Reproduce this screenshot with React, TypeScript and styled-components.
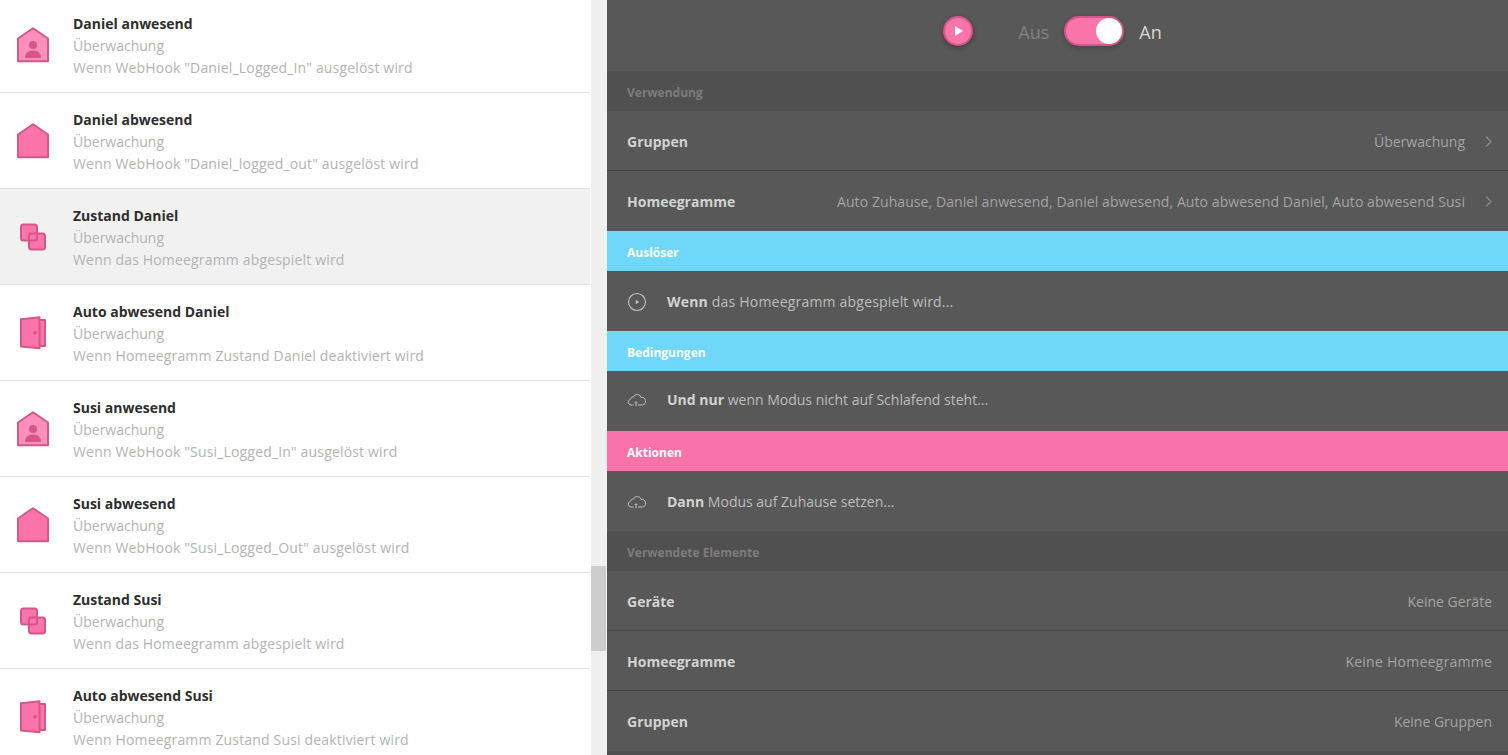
import styled, { createGlobalStyle } from 'styled-components';

const GlobalStyle = createGlobalStyle`
  html, body {
    margin: 0;
    padding: 0;
    height: 100%;
    overflow: hidden;
  }
  body {
    font-family: "Open Sans", "Noto Sans", sans-serif;
    font-size: 14px;
    background: #fff;
  }
`;

type IconKind = 'person' | 'house' | 'copy' | 'door';

const homeegrams: { title: string; text: string; icon: IconKind; active?: boolean }[] = [
  { title: 'Daniel anwesend', text: 'Wenn WebHook "Daniel_Logged_In" ausgelöst wird', icon: 'person' },
  { title: 'Daniel abwesend', text: 'Wenn WebHook "Daniel_logged_out" ausgelöst wird', icon: 'house' },
  { title: 'Zustand Daniel', text: 'Wenn das Homeegramm abgespielt wird', icon: 'copy', active: true },
  { title: 'Auto abwesend Daniel', text: 'Wenn Homeegramm Zustand Daniel deaktiviert wird', icon: 'door' },
  { title: 'Susi anwesend', text: 'Wenn WebHook "Susi_Logged_In" ausgelöst wird', icon: 'person' },
  { title: 'Susi abwesend', text: 'Wenn WebHook "Susi_Logged_Out" ausgelöst wird', icon: 'house' },
  { title: 'Zustand Susi', text: 'Wenn das Homeegramm abgespielt wird', icon: 'copy' },
  { title: 'Auto abwesend Susi', text: 'Wenn Homeegramm Zustand Susi deaktiviert wird', icon: 'door' },
];

function ListIcon({ kind }: { kind: IconKind }) {
  const stroke = '#d4578a';
  const fill = '#fb74aa';
  if (kind === 'copy') {
    return (
      <svg width="34" height="34" viewBox="0 0 34 34">
        <rect x="5" y="4.500" width="16" height="16" rx="2.500" fill={fill} />
        <rect x="13" y="13.500" width="16" height="16" rx="2.500" fill={fill} stroke={stroke} strokeWidth="2" />
        <rect x="5" y="4.500" width="16" height="16" rx="2.500" fill="none" stroke={stroke} strokeWidth="2" />
      </svg>
    );
  }
  if (kind === 'door') {
    return (
      <svg width="34" height="34" viewBox="0 0 34 34">
        <path d="M24 4h5v26h-5" fill={fill} stroke={stroke} strokeWidth="2" strokeLinejoin="round" />
        <path d="M5 3.200 23.500 1.300v31L5 30.500z" fill={fill} stroke={stroke} strokeWidth="2" strokeLinejoin="round" />
        <circle cx="19" cy="16.800" r="1.800" fill={stroke} />
      </svg>
    );
  }
  return (
    <svg width="34" height="36" viewBox="0 0 34 36">
      <path
        d="M17 1.200 32 11.500v22.700H2V11.500z"
        fill={kind === 'person' ? '#fd8fbc' : fill}
        stroke={stroke}
        strokeWidth="2"
        strokeLinejoin="round"
      />
      {kind === 'person' && (
        <>
          <circle cx="17" cy="18" r="4" fill={stroke} />
          <path d="M9 31c0-5 3-7.500 8-7.500s8 2.500 8 7.500z" fill={stroke} />
        </>
      )}
    </svg>
  );
}

function CloudIcon() {
  return (
    <svg width="20" height="14" viewBox="0 0 20 14" fill="none" stroke="#bdbdbd" strokeWidth="1">
      <path d="M6.500 12H4a2.900 2.900 0 0 1-.6-5.700A3.200 3.200 0 0 1 6.800 3.800a3.700 3.700 0 0 1 7.100 .6 3.800 3.800 0 0 1 1.500 7.600H11" />
      <path d="M7.500 10.200 9 8.700l1.500 1.500M9 9v4" />
    </svg>
  );
}

function PlayOutlineIcon() {
  return (
    <svg width="20" height="20" viewBox="0 0 20 20">
      <circle cx="10" cy="10" r="8.500" fill="none" stroke="#c4c4c4" strokeWidth="1.100" />
      <path d="M8.800 7.700 12 10l-3.200 2.300z" fill="#c4c4c4" />
    </svg>
  );
}

function Chevron() {
  return (
    <svg width="7" height="11" viewBox="0 0 7 11" fill="none" stroke="#8c8c8c" strokeWidth="1.100">
      <path d="M1 .5l5 5-5 5" />
    </svg>
  );
}

function App() {
  return (
    <>
      <GlobalStyle />
      <Page>
        <ListPane>
          <List>
            {homeegrams.map((h) => (
              <ListItem key={h.title} $active={h.active}>
                <IconSlot>
                  <ListIcon kind={h.icon} />
                </IconSlot>
                <ItemBody>
                  <ItemTitle>{h.title}</ItemTitle>
                  <ItemText>Überwachung</ItemText>
                  <ItemText $wide>{h.text}</ItemText>
                </ItemBody>
              </ListItem>
            ))}
          </List>
          <Scrollbar>
            <ScrollThumb />
          </Scrollbar>
        </ListPane>
        <DetailPane>
          <TopBar>
            <PlayButton>
              <svg width="10" height="12" viewBox="0 0 10 12">
                <path d="M1 1l8 5-8 5z" fill="#fff" />
              </svg>
            </PlayButton>
            <ToggleLabel>Aus</ToggleLabel>
            <Toggle>
              <ToggleKnob />
            </Toggle>
            <ToggleLabel $on>An</ToggleLabel>
          </TopBar>

          <SectionHead>Verwendung</SectionHead>
          <Row>
            <RowLabel>Gruppen</RowLabel>
            <RowValue>Überwachung</RowValue>
            <ChevronSlot>
              <Chevron />
            </ChevronSlot>
          </Row>
          <Row $last>
            <RowLabel>Homeegramme</RowLabel>
            <RowValue $spacing={0.08}>
              Auto Zuhause, Daniel anwesend, Daniel abwesend, Auto abwesend Daniel, Auto abwesend Susi
            </RowValue>
            <ChevronSlot>
              <Chevron />
            </ChevronSlot>
          </Row>

          <SectionHead $color="#6fd7fa">Auslöser</SectionHead>
          <RuleRow>
            <RuleIcon>
              <PlayOutlineIcon />
            </RuleIcon>
            <RuleText $wide>
              <b>Wenn</b> das Homeegramm abgespielt wird...
            </RuleText>
          </RuleRow>

          <SectionHead $color="#6fd7fa">Bedingungen</SectionHead>
          <RuleRow $raised>
            <RuleIcon>
              <CloudIcon />
            </RuleIcon>
            <RuleText>
              <b>Und nur</b> wenn Modus nicht auf Schlafend steht...
            </RuleText>
          </RuleRow>

          <SectionHead $color="#f973aa">Aktionen</SectionHead>
          <RuleRow>
            <RuleIcon>
              <CloudIcon />
            </RuleIcon>
            <RuleText>
              <b>Dann</b> Modus auf Zuhause setzen...
            </RuleText>
          </RuleRow>

          <SectionHead>Verwendete Elemente</SectionHead>
          <Row>
            <RowLabel>Geräte</RowLabel>
            <RowValue>Keine Geräte</RowValue>
          </Row>
          <Row>
            <RowLabel>Homeegramme</RowLabel>
            <RowValue $spacing={0.25}>Keine Homeegramme</RowValue>
          </Row>
          <Row $last>
            <RowLabel>Gruppen</RowLabel>
            <RowValue>Keine Gruppen</RowValue>
          </Row>
          <SectionHead />
        </DetailPane>
      </Page>
    </>
  );
}

const Page = styled.div`
  display: flex;
  width: 1508px;
  height: 755px;
  overflow: hidden;
`;

const ListPane = styled.div`
  display: flex;
  width: 607px;
  flex-shrink: 0;
  background: #f0f0f0;
`;

const List = styled.div`
  width: 591px;
  box-sizing: border-box;
  padding-right: 1px;
  background: #fff;
  margin-top: -3px;
`;

const ListItem = styled.div<{ $active?: boolean }>`
  display: flex;
  height: 95px;
  border-bottom: 1px solid #e2e2e2;
  background: ${(p) => (p.$active ? '#f1f1f1' : '#fff')};
  &:last-child {
    border-bottom: none;
  }
`;

const IconSlot = styled.div`
  display: flex;
  align-items: center;
  justify-content: center;
  width: 73px;
  flex-shrink: 0;
  padding-right: 7px;
  box-sizing: border-box;
`;

const ItemBody = styled.div`
  display: flex;
  flex-direction: column;
  justify-content: center;
  gap: 3px;
  padding-top: 1px;
`;

const ItemTitle = styled.div`
  font-weight: 700;
  font-size: 14px;
  line-height: 19px;
  color: #2e2e2e;
`;

const ItemText = styled.div<{ $wide?: boolean }>`
  font-size: 14px;
  line-height: 19px;
  color: #b3b3b3;
  letter-spacing: ${(p) => (p.$wide ? '0.17px' : '0')};
`;

const Scrollbar = styled.div`
  flex: 1;
  display: flex;
  flex-direction: column;
  padding-top: 566px;
`;

const ScrollThumb = styled.div`
  width: 15px;
  height: 85px;
  background: #cdcdcd;
`;

const DetailPane = styled.div`
  flex: 1;
  background: #585858;
  overflow: hidden;
`;

const TopBar = styled.div`
  display: flex;
  align-items: center;
  justify-content: center;
  height: 71px;
  padding: 0 10px 9px 0;
  box-sizing: border-box;
`;

const PlayButton = styled.div`
  display: flex;
  align-items: center;
  justify-content: center;
  width: 30px;
  height: 30px;
  box-sizing: border-box;
  padding-left: 2px;
  border-radius: 50%;
  background: #fb74aa;
  border: 2px solid #d4578a;
  box-shadow: 0 2px 5px rgba(0, 0, 0, 0.3);
  margin-right: 45px;
`;

const ToggleLabel = styled.span<{ $on?: boolean }>`
  font-size: 18px;
  padding-top: 1px;
  color: ${(p) => (p.$on ? '#d6d6d6' : '#808080')};
`;

const Toggle = styled.div`
  display: flex;
  justify-content: flex-end;
  align-items: center;
  width: 60px;
  height: 30px;
  margin: 0 15px;
  box-sizing: border-box;
  border-radius: 15px;
  background: #fb74aa;
  border: 2px solid #d4578a;
  box-shadow: 0 2px 5px rgba(0, 0, 0, 0.2);
`;

const ToggleKnob = styled.div`
  width: 26px;
  height: 26px;
  border-radius: 50%;
  background: #fff;
`;

const SectionHead = styled.div<{ $color?: string }>`
  display: flex;
  align-items: center;
  height: 40px;
  box-sizing: border-box;
  padding: 2px 0 0 20px;
  font-size: 12px;
  font-weight: 700;
  background: ${(p) => p.$color ?? '#505050'};
  color: ${(p) => (p.$color ? '#fff' : '#7c7c7c')};
`;

const Row = styled.div<{ $last?: boolean }>`
  display: flex;
  align-items: center;
  height: 60px;
  padding: 1px 16px 0 20px;
  box-sizing: border-box;
  border-bottom: ${(p) => (p.$last ? 'none' : '1px solid #484848')};
`;

const RowLabel = styled.span`
  font-weight: 700;
  color: #d2d2d2;
`;

const RowValue = styled.span<{ $spacing?: number }>`
  margin-left: auto;
  color: #a4a4a4;
  letter-spacing: ${(p) => p.$spacing ?? 0}px;
`;

const ChevronSlot = styled.span`
  display: flex;
  margin-left: 20px;
`;

const RuleRow = styled.div<{ $raised?: boolean }>`
  display: flex;
  align-items: center;
  height: 60px;
  box-sizing: border-box;
  padding: ${(p) => (p.$raised ? '0 0 3px 20px' : '1px 0 0 20px')};
`;

const RuleIcon = styled.span`
  display: flex;
  justify-content: center;
  width: 20px;
  margin-right: 20px;
`;

const RuleText = styled.span<{ $wide?: boolean }>`
  color: #bdbdbd;
  letter-spacing: ${(p) => (p.$wide ? '0.2px' : '0')};
  b {
    color: #d2d2d2;
  }
`;

export default App;
